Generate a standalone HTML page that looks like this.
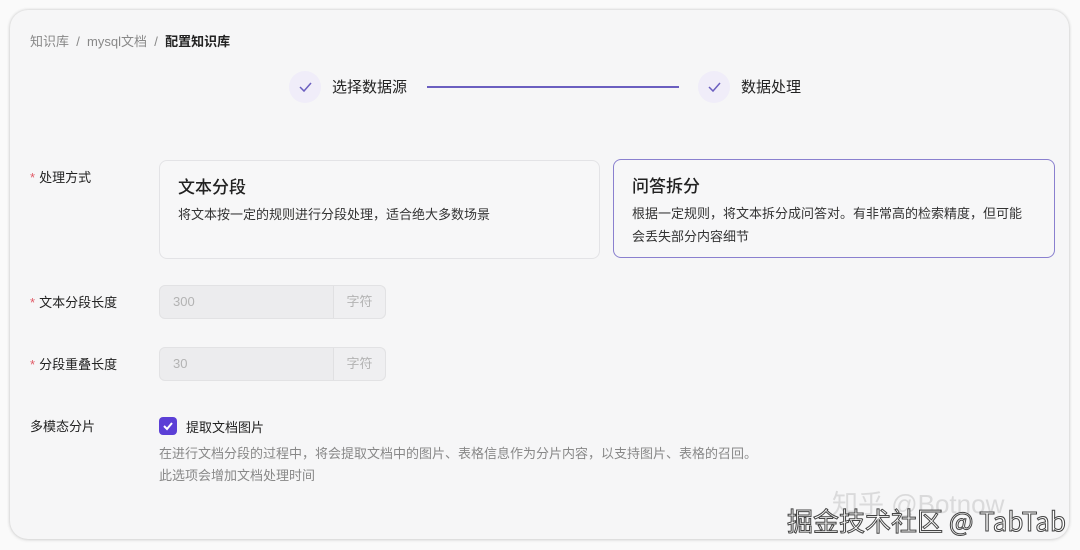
<!DOCTYPE html>
<html><head><meta charset="utf-8"><style>
*{margin:0;padding:0;box-sizing:border-box}
body{width:1080px;height:550px;background:#fafafa;font-family:"Liberation Sans","Noto Sans CJK SC",sans-serif;position:relative;overflow:hidden;color:#222}
.card{position:absolute;left:10px;top:10px;width:1059px;height:529px;background:#f6f6f7;border-radius:18px;box-shadow:0 0 3px rgba(0,0,0,.18),0 1px 4px rgba(0,0,0,.08)}
.a{position:absolute;white-space:nowrap}
.bc{left:30px;top:31px;font-size:13px;color:#888}
.bc b{color:#222;font-weight:600}
.step{width:32px;height:32px;border-radius:50%;background:#f0edf9}
.st{font-size:15px;color:#222}
.lbl{font-size:13px;color:#222;left:30px}
.lbl i{color:#e05a66;font-style:normal;margin-right:4px}
.opt{position:absolute;border-radius:8px;background:#f7f7f8;border:1px solid #e3e3e6}
.opt h3{font-size:17px;font-weight:500;position:absolute;left:18px;top:12px}
.opt p{font-size:13px;position:absolute;left:18px;top:42px;line-height:23px;color:#333}
.inp{position:absolute;left:159px;width:227px;height:34px;border:1px solid #e2e2e4;border-radius:6px;background:#ececee;font-size:13px;color:#b3b3b3}
.inp span{position:absolute;left:13px;top:8px}
.inp em{position:absolute;right:0;top:0;width:52px;height:32px;border-left:1px solid #e0e0e2;font-style:normal;text-align:center;line-height:32px;background:#efeff1;border-radius:0 6px 6px 0}
.help{font-size:13px;color:#888;left:159px;line-height:22px}
.wm{font-size:26px;color:#fff;-webkit-text-stroke:1px #444;font-family:"Noto Sans CJK SC",sans-serif}
</style></head><body>
<div class="card"></div>
<div class="a bc">知识库 &nbsp;/&nbsp; mysql文档 &nbsp;/&nbsp; <b>配置知识库</b></div>
<div class="a step" style="left:289px;top:71px"><svg width="32" height="32"><path d="M11 16l4 4 7-8" fill="none" stroke="#6b5fc0" stroke-width="1.5"/></svg></div>
<div class="a st" style="left:332px;top:76px">选择数据源</div>
<div class="a" style="left:427px;top:86px;width:252px;height:1.5px;background:#6b5fc0"></div>
<div class="a step" style="left:698px;top:71px"><svg width="32" height="32"><path d="M11 16l4 4 7-8" fill="none" stroke="#6b5fc0" stroke-width="1.5"/></svg></div>
<div class="a st" style="left:741px;top:76px">数据处理</div>

<div class="a lbl" style="top:167px"><i>*</i>处理方式</div>
<div class="opt" style="left:159px;top:160px;width:441px;height:99px"><h3>文本分段</h3><p>将文本按一定的规则进行分段处理，适合绝大多数场景</p></div>
<div class="opt" style="left:613px;top:159px;width:442px;height:99px;border:1.5px solid #8a80cf"><h3>问答拆分</h3><p>根据一定规则，将文本拆分成问答对。有非常高的检索精度，但可能<br>会丢失部分内容细节</p></div>

<div class="a lbl" style="top:292px"><i>*</i>文本分段长度</div>
<div class="inp" style="top:285px"><span>300</span><em>字符</em></div>
<div class="a lbl" style="top:354px"><i>*</i>分段重叠长度</div>
<div class="inp" style="top:347px"><span>30</span><em>字符</em></div>

<div class="a lbl" style="top:416px">多模态分片</div>
<div class="a" style="left:159px;top:417px;width:18px;height:18px;border-radius:4px;background:#5b3fd6"><svg width="18" height="18"><path d="M5 9l3 3 5-6" fill="none" stroke="#fff" stroke-width="2"/></svg></div>
<div class="a" style="left:186px;top:417px;font-size:13px">提取文档图片</div>
<div class="a help" style="top:443px">在进行文档分段的过程中，将会提取文档中的图片、表格信息作为分片内容，以支持图片、表格的召回。<br>此选项会增加文档处理时间</div>

<div class="a" style="left:832px;top:484px;font-size:26px;color:rgba(200,200,200,.6)">知乎 @Botnow</div>
<div class="a wm" style="left:787px;top:502px">掘金技术社区 @ TabTab</div>
</body></html>
